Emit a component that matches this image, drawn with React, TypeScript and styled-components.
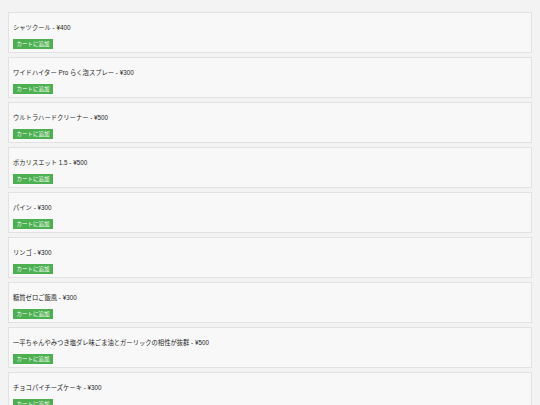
import React from 'react';
import styled, { createGlobalStyle } from 'styled-components';

const products = [
  { name: 'シャツクール', price: 400 },
  { name: 'ワイドハイター Pro らく泡スプレー', price: 300 },
  { name: 'ウルトラハードクリーナー', price: 500 },
  { name: 'ポカリスエット 1.5', price: 500 },
  { name: 'パイン', price: 300 },
  { name: 'リンゴ', price: 300 },
  { name: '糖質ゼロご飯風', price: 300 },
  { name: '一平ちゃんやみつき塩ダレ味ごま油とガーリックの相性が抜群', price: 500 },
  { name: 'チョコパイチーズケーキ', price: 300 },
];

const GlobalStyle = createGlobalStyle`
  body {
    margin: 0;
    background: #f3f3f3;
    font-family: "Liberation Sans", "Noto Sans CJK JP", sans-serif;
  }
`;

const List = styled.div`
  padding: 12px 8px;
  display: flex;
  flex-direction: column;
  gap: 4px;
`;

const Card = styled.div`
  background: #f8f8f8;
  border: 1px solid #e2e2e2;
  height: 41px;
  box-sizing: border-box;
  padding: 0 4px;
  display: flex;
  flex-direction: column;
  align-items: flex-start;
`;

const Title = styled.p`
  margin: 11px 0 7px;
  font-size: 6.3px;
  line-height: 8px;
  color: #1e1e1e;
`;

const AddButton = styled.button`
  background: #4caf50;
  color: #fff;
  border: none;
  font-family: inherit;
  font-size: 5.5px;
  height: 10px;
  width: 40px;
  padding: 0;
  line-height: 10px;
  cursor: pointer;
`;

export default function App() {
  return (
    <>
      <GlobalStyle />
      <List>
        {products.map((p) => (
          <Card key={p.name}>
            <Title>
              {p.name} - ¥{p.price}
            </Title>
            <AddButton>カートに追加</AddButton>
          </Card>
        ))}
      </List>
    </>
  );
}
